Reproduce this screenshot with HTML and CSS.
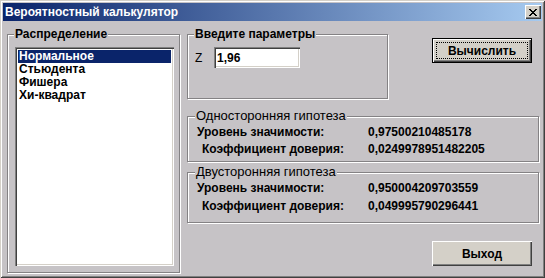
FILE: index.html
```html
<!DOCTYPE html>
<html lang="ru">
<head>
  <meta charset="UTF-8" />
  <title>Вероятностный калькулятор</title>
  <link rel="stylesheet" href="styles.css">
</head>
<body>

  <div class="window">
    <!-- Title bar -->
    <div class="titlebar">
      <span class="title">Вероятностный калькулятор</span>
      <button class="close" type="button">
        <svg width="8" height="7" viewBox="0 0 8 7" shape-rendering="crispEdges">
          <path fill="#000" d="M0 0h2v1H0zM6 0h2v1H6zM1 1h2v1H1zM5 1h2v1H5zM2 2h4v1H2zM3 3h2v1H3zM2 4h4v1H2zM1 5h2v1H1zM5 5h2v1H5zM0 6h2v1H0zM6 6h2v1H6z"/>
        </svg>
      </button>
    </div>

    <div class="content">
      <!-- Distribution list -->
      <fieldset class="group dist">
        <legend>Распределение</legend>
        <ul class="listbox">
          <li class="selected">Нормальное</li>
          <li>Стьюдента</li>
          <li>Фишера</li>
          <li>Хи-квадрат</li>
        </ul>
      </fieldset>

      <div class="right">
        <div class="top-row">
          <fieldset class="group params">
            <legend>Введите параметры</legend>
            <label class="param">
              <span class="param-name">Z</span>
              <input class="field" type="text" value="1,96">
            </label>
          </fieldset>
          <button class="btn default calc" type="button"><span class="focus">Вычислить</span></button>
        </div>

        <fieldset class="group hyp one">
          <legend>Односторонняя гипотеза</legend>
          <div class="row">
            <span class="lbl">Уровень значимости:</span>
            <span class="val">0,97500210485178</span>
          </div>
          <div class="row">
            <span class="lbl indent">Коэффициент доверия:</span>
            <span class="val">0,0249978951482205</span>
          </div>
        </fieldset>

        <fieldset class="group hyp two">
          <legend>Двусторонняя гипотеза</legend>
          <div class="row">
            <span class="lbl">Уровень значимости:</span>
            <span class="val">0,950004209703559</span>
          </div>
          <div class="row">
            <span class="lbl indent">Коэффициент доверия:</span>
            <span class="val">0,049995790296441</span>
          </div>
        </fieldset>

        <button class="btn exit" type="button">Выход</button>
      </div>
    </div>
  </div>

</body>
</html>
```

FILE: styles.css
```css
body {
  margin: 0;
  background: #c6c3c6;
  font-family: 'Liberation Sans', Arial, sans-serif;
  font-size: 12px;
  color: #000;
}

.window {
  width: 545px;
  height: 278px;
  box-sizing: border-box;
  padding: 3px;
  background: #c6c3c6;
  box-shadow: inset 1px 1px #d4d0c8, inset -1px -1px #404040,
              inset 2px 2px #fff, inset -2px -2px #808080;
}

/* Title bar */
.titlebar {
  height: 18px;
  display: flex;
  align-items: center;
  justify-content: space-between;
  padding: 0 1px 0 2px;
  background: linear-gradient(to right, #0a246a, #a6caf0);
  color: #fff;
  font-weight: bold;
  font-size: 12px;
}

.close {
  width: 16px;
  height: 14px;
  padding: 0;
  border: none;
  background: #d4d0c8;
  display: flex;
  align-items: center;
  justify-content: center;
  box-shadow: inset 1px 1px #fff, inset -1px -1px #404040, inset -2px -2px #808080;
}

.content {
  display: flex;
  gap: 7px;
  padding: 6px 0 0 4px;
}

/* Group boxes */
.group {
  margin: 0;
  box-sizing: border-box;
  min-width: 0;
  border: 1px solid #848284;
  box-shadow: inset 1px 1px #fff, 1px 1px #fff;
  padding: 0 5px 0 7px;
}

.group legend {
  padding: 0 1px;
  margin-left: -1px;
  line-height: 14px;
  font-weight: bold;
  background: #c6c3c6;
}

.dist {
  width: 173px;
  height: 246px;
  padding-top: 6px;
}

.listbox {
  list-style: none;
  margin: 0;
  padding: 3px 3px;
  height: 219px;
  box-sizing: border-box;
  background: #fff;
  box-shadow: inset 1px 1px #808080, inset 2px 2px #404040,
              inset -1px -1px #fff, inset -2px -2px #d4d0c8;
}

.listbox li {
  height: 13px;
  line-height: 13px;
  padding-left: 1px;
  font-weight: bold;
}

.listbox .selected {
  background: #0a246a;
  color: #fff;
}

.right {
  width: 352px;
  display: flex;
  flex-direction: column;
}

.top-row {
  display: flex;
  align-items: flex-start;
}

.params {
  width: 201px;
  height: 72px;
  padding-top: 6px;
}

.param {
  display: flex;
  align-items: center;
}

.param-name {
  width: 19px;
}

.field {
  width: 86px;
  height: 21px;
  box-sizing: border-box;
  margin: 0;
  border: none;
  padding: 0 3px;
  font-family: inherit;
  font-size: 12px;
  font-weight: bold;
  background: #fff;
  box-shadow: inset 1px 1px #808080, inset 2px 2px #404040,
              inset -1px -1px #fff, inset -2px -2px #d4d0c8;
}

/* Buttons */
.btn {
  width: 100px;
  height: 25px;
  box-sizing: border-box;
  padding: 0;
  border: none;
  background: #d4d0c8;
  font-family: inherit;
  font-size: 12px;
  font-weight: bold;
  color: #000;
  box-shadow: inset 1px 1px #fff, inset -1px -1px #404040, inset -2px -2px #808080;
}

.btn.default {
  border: 1px solid #000;
  display: flex;
}

.focus {
  flex: 1;
  margin: 3px;
  border: 1px dotted #000;
  display: flex;
  align-items: center;
  justify-content: center;
}

.calc {
  margin: 11px 0 0 44px;
}

.exit {
  margin: 18px 0 0 245px;
}

/* Hypothesis results */
.hyp {
  width: 352px;
  padding: 0 5px 0 8px;
}

.hyp legend {
  font-weight: normal;
  font-size: 13px;
}

.one {
  height: 53px;
  margin-top: 10px;
}

.two {
  height: 58px;
  margin-top: 3px;
}

.row {
  display: grid;
  grid-template-columns: 172px auto;
  align-items: center;
  height: 17px;
  font-weight: bold;
}

.two .row {
  height: 18px;
}

.lbl {
  padding-left: 1px;
}

.lbl.indent {
  padding-left: 6px;
}
```
